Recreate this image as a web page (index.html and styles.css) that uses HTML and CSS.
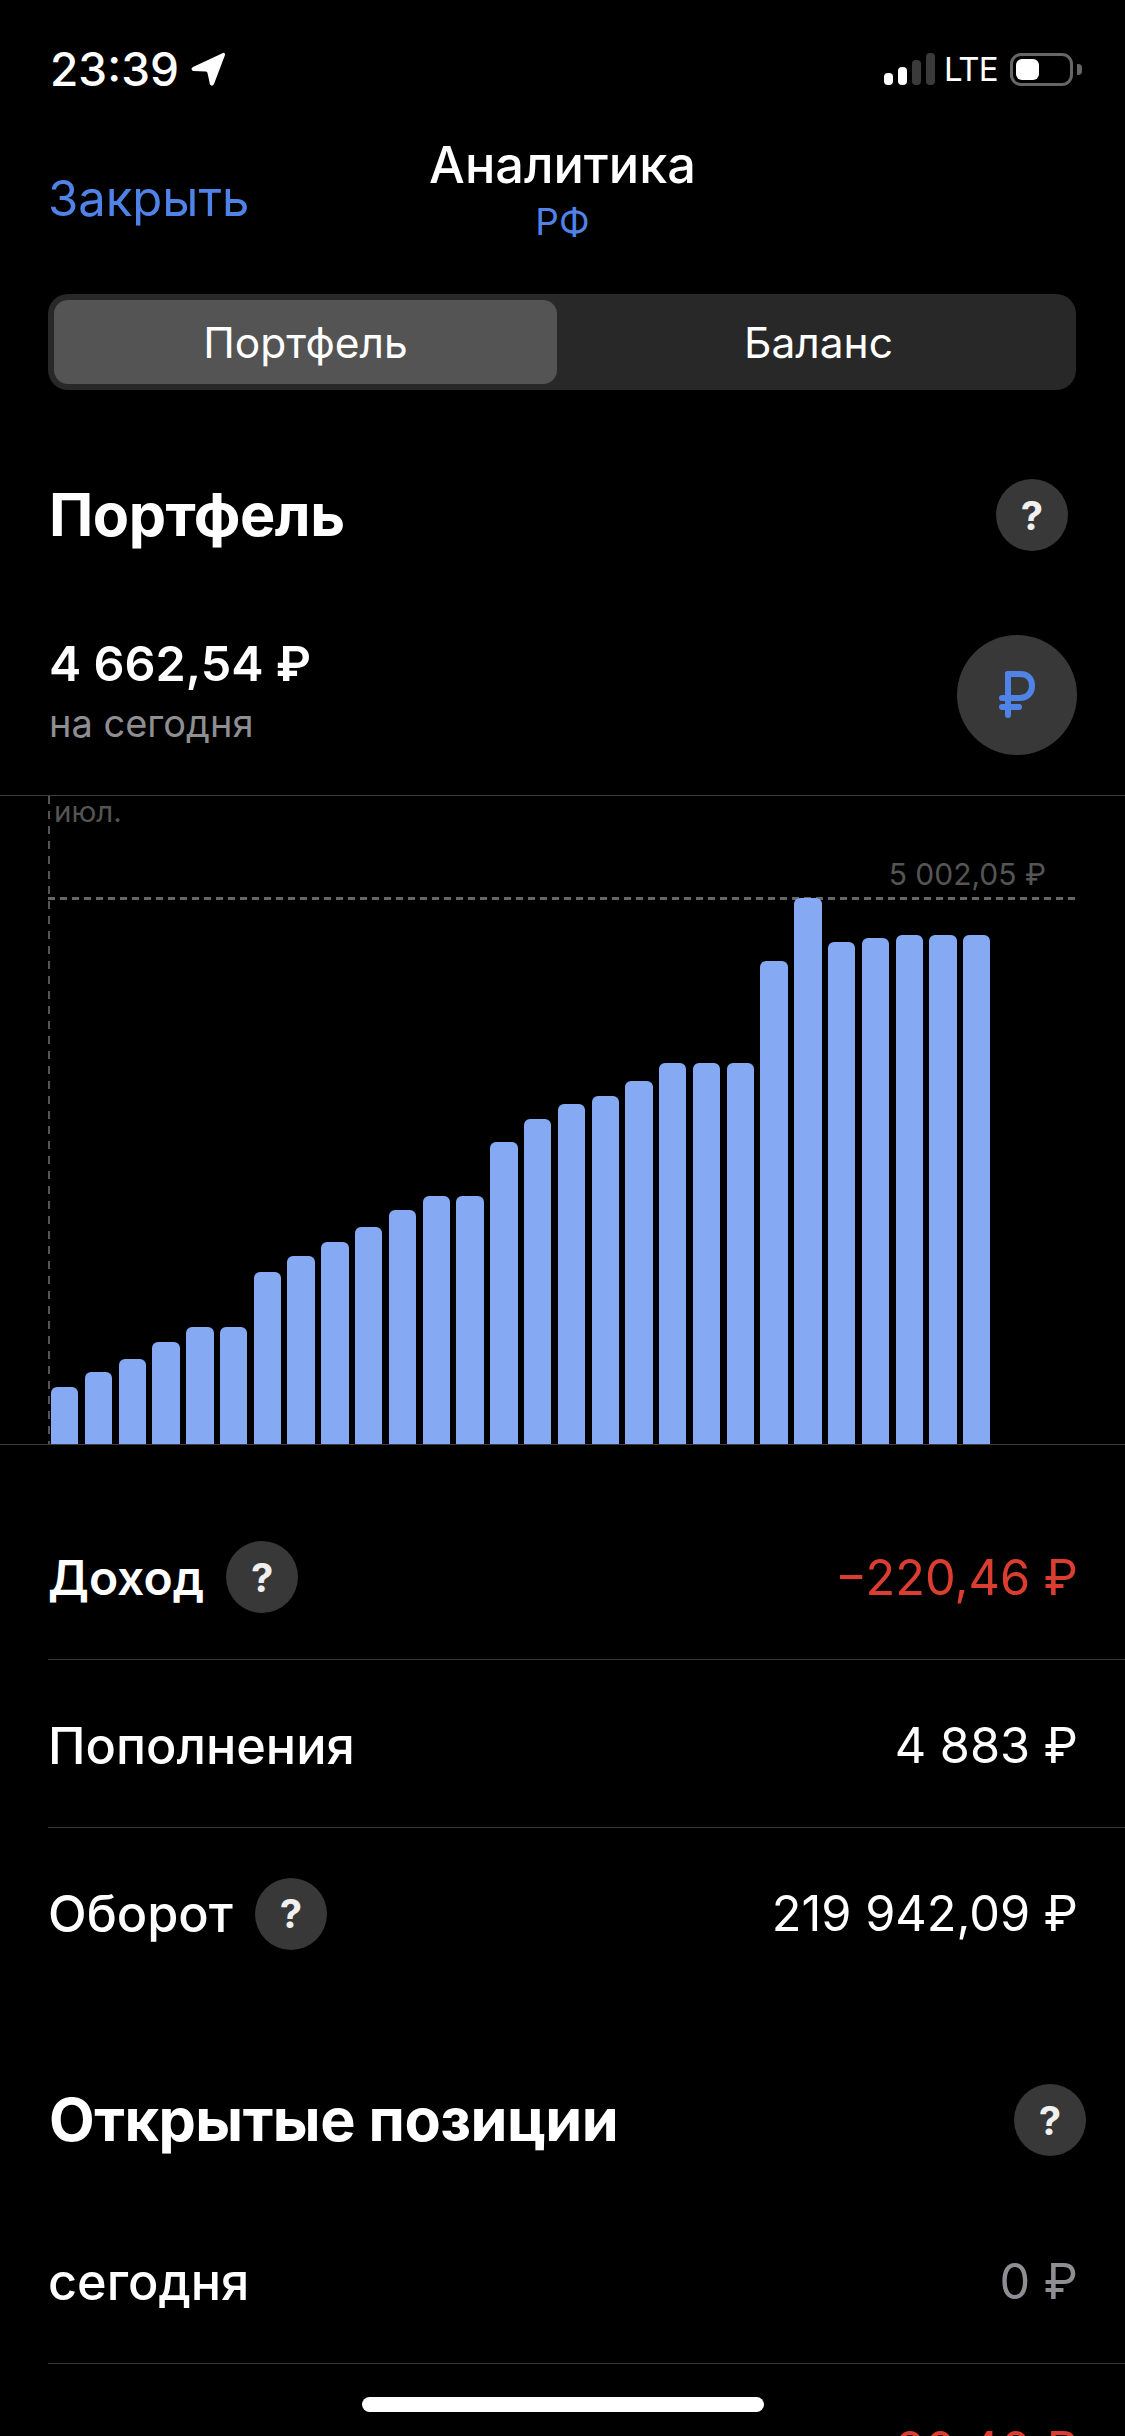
FILE: index.html
```html
<!DOCTYPE html>
<html lang="ru">
<head>
<meta charset="utf-8">
<title>Аналитика</title>
<link rel="stylesheet" href="styles.css">
</head>
<body>
<div class="screen">
  <header class="status">
    <div class="status-left">
      <span class="time">23:39</span>
      <svg class="loc" width="36" height="36" viewBox="0 0 36 36"><path d="M33 2 L3 16 Q0 18 3 20 L16 20.500 Q17 20.500 17.500 22 L20 33.500 Q22 36 24 33 L35 4 Q35 1 33 2 Z" fill="#fff"/></svg>
    </div>
    <div class="status-right">
      <div class="signal"><i class="s1"></i><i class="s2"></i><i class="s3"></i><i class="s4"></i></div>
      <span class="lte">LTE</span>
      <div class="battery"><div class="battery-level"></div></div>
      <div class="battery-nub"></div>
    </div>
  </header>

  <nav class="nav">
    <a class="close">Закрыть</a>
    <div class="nav-title">
      <div class="title">Аналитика</div>
      <div class="subtitle">РФ</div>
    </div>
    <span></span>
  </nav>

  <div class="segment">
    <div class="seg seg-on">Портфель</div>
    <div class="seg seg-off">Баланс</div>
  </div>

  <section class="head head-portfolio">
    <h2>Портфель</h2>
    <span class="help">?</span>
  </section>

  <section class="total">
    <div class="total-text">
      <div class="total-value">4 662,54 ₽</div>
      <div class="total-sub">на сегодня</div>
    </div>
    <div class="currency">
      <svg width="120" height="120" viewBox="0 0 120 120" fill="none" stroke="#4f83e8" stroke-width="6" stroke-linecap="round" stroke-linejoin="round">
        <path d="M51 39 V80"/>
        <path d="M51 39 H63 C73 39 75 46 75 51 C75 57 71 63 63 63 H45"/>
        <path d="M45 72 H62"/>
      </svg>
    </div>
  </section>

  <section class="chart">
    <div class="v-guide"></div>
    <div class="h-guide"></div>
    <span class="month">июл.</span>
    <span class="max">5 002,05 ₽</span>
    <div class="bars">
      <i style="height:57px"></i><i style="height:72px"></i><i style="height:85px"></i><i style="height:102px"></i>
      <i style="height:117px"></i><i style="height:117px"></i><i style="height:172px"></i><i style="height:188px"></i>
      <i style="height:202px"></i><i style="height:217px"></i><i style="height:234px"></i><i style="height:248px"></i>
      <i style="height:248px"></i><i style="height:302px"></i><i style="height:325px"></i><i style="height:340px"></i>
      <i style="height:348px"></i><i style="height:363px"></i><i style="height:381px"></i><i style="height:381px"></i>
      <i style="height:381px"></i><i style="height:483px"></i><i style="height:546px"></i><i style="height:502px"></i>
      <i style="height:506px"></i><i style="height:509px"></i><i style="height:509px"></i><i style="height:509px"></i>
    </div>
  </section>

  <section class="rows">
    <div class="row">
      <div class="row-label"><span class="strong">Доход</span><span class="help">?</span></div>
      <div class="value red">−220,46 ₽</div>
    </div>
    <div class="row">
      <div class="row-label"><span>Пополнения</span></div>
      <div class="value">4 883 ₽</div>
    </div>
    <div class="row row-last">
      <div class="row-label"><span>Оборот</span><span class="help">?</span></div>
      <div class="value">219 942,09 ₽</div>
    </div>
  </section>

  <section class="head head-positions">
    <h2>Открытые позиции</h2>
    <span class="help">?</span>
  </section>

  <section class="rows rows-positions">
    <div class="row">
      <div class="row-label"><span>сегодня</span></div>
      <div class="value grey">0 ₽</div>
    </div>
    <div class="row row-last">
      <div class="row-label"></div>
      <div class="value red">−20,46 ₽</div>
    </div>
  </section>

  <div class="home"></div>
</div>
</body>
</html>
```
FILE: styles.css
```css
* { box-sizing: border-box; }
html, body { margin: 0; padding: 0; background: #000; }
body { font-family: Inter, "Noto Sans", "Liberation Sans", sans-serif; color: #fff; }
.screen { position: relative; width: 1125px; height: 2436px; overflow: hidden; background: #000; }

.status { display: flex; justify-content: space-between; align-items: center; height: 72px; margin-top: 33px; padding: 0 43px 0 50px; }
.status-left { display: flex; align-items: center; gap: 11px; }
.time { font-size: 46px; line-height: 44px; font-weight: 500; }
.loc { display: block; }
.status-right { display: flex; align-items: center; }
.signal { display: flex; align-items: flex-end; gap: 5px; height: 32px; }
.signal i { display: block; width: 9px; border-radius: 4px; }
.s1 { height: 12px; background: #fff; }
.s2 { height: 18px; background: #fff; }
.s3 { height: 25px; background: #3a3a3a; }
.s4 { height: 32px; background: #3a3a3a; }
.lte { margin-left: 9px; font-size: 33px; line-height: 36px; font-weight: 400; letter-spacing: -1px; }
.battery { width: 63px; height: 33px; margin-left: 12.500px; padding: 3px; border: 3px solid #666; border-radius: 11px; }
.battery-level { width: 23px; height: 21px; background: #fff; border-radius: 6px; }
.battery-nub { width: 5px; height: 11px; margin-left: 4px; background: #666; border-radius: 0 4px 4px 0; }

.nav { display: grid; grid-template-columns: 1fr auto 1fr; align-items: center; height: 112px; margin-top: 28px; padding: 0 48px; }
.close { font-size: 49px; line-height: 60px; color: #4f83e8; margin-top: 20px; }
.nav-title { text-align: center; }
.title { font-size: 50.500px; line-height: 60px; font-weight: 500; }
.subtitle { font-size: 37px; line-height: 44px; color: #4f83e8; margin-top: 5px; }

.segment { display: flex; width: 1028px; height: 96px; margin: 49px 0 0 48px; padding: 6px; background: #282828; border-radius: 20px; }
.seg { display: flex; align-items: center; justify-content: center; font-size: 42.500px; border-radius: 14px; }
.seg-on { flex: none; width: 503px; background: #545454; }
.seg-off { flex: 1; padding-left: 10px; }

.head { display: flex; align-items: center; justify-content: space-between; height: 72px; }
.head h2 { margin: 0; font-size: 59.300px; line-height: 72px; font-weight: 700; letter-spacing: -0.5px; }
.head-portfolio { margin-top: 89px; padding: 0 57px 0 49px; }
.head-positions { margin-top: 88px; padding: 0 39px 0 49px; }

.help { display: flex; align-items: center; justify-content: center; flex: none; width: 72px; height: 72px; border-radius: 50%; background: #383838; color: #f0f0f0; font-size: 40px; font-weight: 700; }

.total { display: flex; align-items: center; justify-content: space-between; height: 120px; margin-top: 84px; padding: 0 48px 0 49px; }
.total-text { padding-bottom: 11px; }
.total-value { font-size: 48.500px; line-height: 60px; font-weight: 600; }
.total-sub { font-size: 38px; line-height: 44px; color: #8e8e93; margin-top: 7px; }
.currency { width: 120px; height: 120px; border-radius: 50%; background: #383838; }
.currency svg { display: block; }

.chart { position: relative; height: 650px; margin-top: 40px; border-top: 1px solid #3c3c3c; border-bottom: 1px solid #3c3c3c; }
.v-guide { position: absolute; left: 48px; top: 0; bottom: 0; width: 2px; background: repeating-linear-gradient(to bottom, #555 0 8px, transparent 8px 15px); }
.h-guide { position: absolute; left: 48px; width: 1028px; top: 101px; height: 3px; background: repeating-linear-gradient(to right, #666 0 7px, transparent 7px 12px); }
.month { position: absolute; left: 54px; top: -2px; font-size: 29.500px; line-height: 34px; color: #555; }
.max { position: absolute; right: 79px; top: 60px; font-size: 30px; line-height: 36px; color: #555; }
.bars { position: absolute; left: 51px; bottom: 0; display: flex; align-items: flex-end; gap: 6.400px; }
.bars i { display: block; width: 27.400px; background: #85aaf3; border-radius: 6px 6px 0 0; }

.rows { margin-left: 48px; margin-top: 47px; }
.row { display: flex; align-items: center; justify-content: space-between; height: 168px; padding: 3px 47px 0 0; border-bottom: 1px solid #333; font-size: 50.400px; }
.row-last { border-bottom: 0; }
.row-label { display: flex; align-items: center; gap: 22px; font-weight: 500; }
.strong { font-size: 48px; font-weight: 600; }
.value { font-size: 48.700px; font-weight: 400; }
.red { color: #dc3d31; }
.grey { color: #8e8e93; }
.rows-positions { margin-top: 40px; }

.home { position: absolute; left: 362px; top: 2397px; width: 402px; height: 15px; border-radius: 8px; background: #fff; }
```
